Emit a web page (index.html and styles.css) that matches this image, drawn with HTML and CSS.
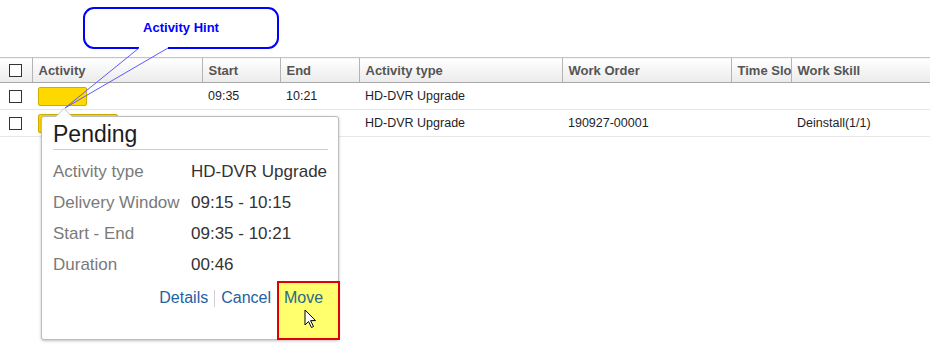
FILE: index.html
```html
<!DOCTYPE html>
<html lang="en">
<head>
    <meta charset="UTF-8">
    <meta name="viewport" content="width=device-width, initial-scale=1.0">
    <title>Activity list</title>
    <link rel="stylesheet" href="styles.css">
</head>
<body>
    <!-- Activity list -->
    <table class="grid">
        <colgroup>
            <col class="col-check">
            <col class="col-activity">
            <col class="col-start">
            <col class="col-end">
            <col class="col-type">
            <col class="col-order">
            <col class="col-slot">
            <col class="col-skill">
        </colgroup>
        <thead>
            <tr>
                <th class="check-cell"><span class="checkbox"></span></th>
                <th>Activity</th>
                <th>Start</th>
                <th>End</th>
                <th>Activity type</th>
                <th>Work Order</th>
                <th>Time Slot</th>
                <th>Work Skill</th>
            </tr>
        </thead>
        <tbody>
            <tr>
                <td class="check-cell"><span class="checkbox"></span></td>
                <td><span class="bar bar-short"></span></td>
                <td>09:35</td>
                <td>10:21</td>
                <td>HD-DVR Upgrade</td>
                <td></td>
                <td></td>
                <td></td>
            </tr>
            <tr>
                <td class="check-cell"><span class="checkbox"></span></td>
                <td><span class="bar bar-long"></span></td>
                <td></td>
                <td></td>
                <td>HD-DVR Upgrade</td>
                <td>190927-00001</td>
                <td></td>
                <td>Deinstall(1/1)</td>
            </tr>
        </tbody>
    </table>

    <!-- Callout annotation -->
    <svg class="hint" width="280" height="112" viewBox="0 0 280 112">
        <path d="M139 48 H94 A10 10 0 0 1 84 38 V18 A10 10 0 0 1 94 8 H268 A10 10 0 0 1 278 18 V38 A10 10 0 0 1 268 48 H168" fill="#fff" stroke="#0000ff" stroke-width="2"/>
        <path d="M139 48 L65 108 L168 48" fill="none" stroke="#5b5bff" stroke-width="1"/>
        <text x="181" y="32" text-anchor="middle" class="hint-text">Activity Hint</text>
    </svg>

    <!-- Activity popup -->
    <div class="popup">
        <div class="popup-title">Pending</div>
        <div class="popup-row"><span class="popup-label">Activity type</span><span>HD-DVR Upgrade</span></div>
        <div class="popup-row"><span class="popup-label">Delivery Window</span><span>09:15 - 10:15</span></div>
        <div class="popup-row"><span class="popup-label">Start - End</span><span>09:35 - 10:21</span></div>
        <div class="popup-row"><span class="popup-label">Duration</span><span>00:46</span></div>
        <div class="popup-links">
            <a class="link">Details</a>
            <span class="sep"></span>
            <a class="link">Cancel</a>
            <span class="move-box">
                <a class="link move">Move</a>
                <svg class="cursor" width="13" height="20" viewBox="0 0 13 20">
                    <path d="M1 1 V16 L4.5 12.5 L7.5 18.5 L9.5 17.5 L6.6 11.6 H11.5 Z" fill="#fff" stroke="#000" stroke-width="1" stroke-linejoin="round"/>
                </svg>
            </span>
        </div>
    </div>
</body>
</html>
```

FILE: styles.css
```css
body {
    margin: 0;
    font-family: "Liberation Sans", Arial, sans-serif;
    background: #fff;
    color: #222;
}

/* Grid */
.grid {
    margin-top: 57px;
    width: 930px;
    border-collapse: collapse;
    table-layout: fixed;
    font-size: 12.5px;
}
.col-check { width: 32px; }
.col-activity { width: 170px; }
.col-start { width: 78px; }
.col-end { width: 79px; }
.col-type { width: 203px; }
.col-order { width: 169px; }
.col-slot { width: 60px; }
.col-skill { width: 139px; }

.grid th {
    height: 24px;
    padding: 0 0 0 6px;
    text-align: left;
    font-weight: bold;
    font-size: 13px;
    color: #555;
    white-space: nowrap;
    overflow: hidden;
    border-top: 1px solid #c4c4c4;
    border-bottom: 1px solid #a8a8a8;
    border-left: 1px solid #b4b4b4;
    background: linear-gradient(#ffffff, #ebebeb);
}
.grid th:first-child {
    border-left: none;
}
.grid td {
    height: 26px;
    padding: 0 0 0 6px;
    white-space: nowrap;
    overflow: hidden;
    color: #1e1e2a;
    border-bottom: 1px solid #e6e6e6;
}
.grid .check-cell {
    padding-left: 9px;
}
.checkbox {
    display: block;
    width: 11px;
    height: 11px;
    border: 1px solid #333;
    background: #fff;
}
.bar {
    display: block;
    height: 17px;
    background: #ffd800;
    border: 1px solid #cfae00;
    border-radius: 2px;
}
.bar-short { width: 47px; }
.bar-long { width: 78px; }

/* Callout */
.hint {
    position: absolute;
    left: 0;
    top: 0;
}
.hint-text {
    font-family: "Liberation Sans", Arial, sans-serif;
    font-weight: bold;
    font-size: 13px;
    fill: #0000ff;
}

/* Popup */
.popup {
    position: absolute;
    left: 41px;
    top: 116px;
    width: 275px;
    height: 219px;
    padding: 3px 10px 0 11px;
    background: #fff;
    border: 1px solid #bdbdbd;
    border-radius: 3px;
    box-shadow: 0 1px 3px rgba(0, 0, 0, 0.25);
    font-size: 17px;
}
.popup::before,
.popup::after {
    content: "";
    position: absolute;
    left: 14px;
    width: 0;
    height: 0;
    border-left: 8px solid transparent;
    border-right: 8px solid transparent;
}
.popup::before {
    top: -9px;
    border-bottom: 8px solid #c4c4c4;
}
.popup::after {
    top: -8px;
    border-bottom: 8px solid #fff;
}
.popup-title {
    font-size: 23px;
    line-height: 28px;
    color: #1c1c1c;
    padding-bottom: 1px;
    border-bottom: 1px solid #c8cdd2;
    margin-bottom: 6px;
}
.popup-row {
    display: flex;
    line-height: 31px;
    color: #333;
}
.popup-label {
    width: 138px;
    color: #7a7a7a;
}
.popup-links {
    display: flex;
    justify-content: flex-end;
    align-items: flex-start;
    margin-top: 1px;
    margin-right: -12px;
    font-size: 16px;
}
.link {
    line-height: 31px;
    margin-top: 1px;
    color: #2461a3;
    cursor: pointer;
}
.sep {
    width: 1px;
    height: 17px;
    margin: 9px 6px 0;
    background: #cfcfcf;
}
.move-box {
    position: relative;
    width: 54px;
    height: 55px;
    margin-left: 6px;
    padding-left: 5px;
    background: #ffff6e;
    border: 2px solid #e00000;
}
.move {
    display: block;
    margin-top: 0;
    line-height: 30px;
    color: #2a6a86;
}
.cursor {
    position: absolute;
    left: 25px;
    top: 26px;
}
```
